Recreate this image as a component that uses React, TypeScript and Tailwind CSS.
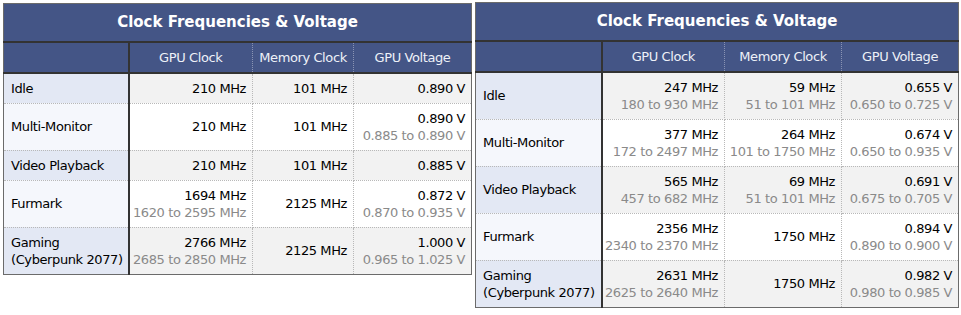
type Cell = { main: string; range?: string };
type Row = { label: string[]; gpu: Cell; mem: Cell; volt: Cell };

const left: Row[] = [
  { label: ["Idle"], gpu: { main: "210 MHz" }, mem: { main: "101 MHz" }, volt: { main: "0.890 V" } },
  {
    label: ["Multi-Monitor"],
    gpu: { main: "210 MHz" },
    mem: { main: "101 MHz" },
    volt: { main: "0.890 V", range: "0.885 to 0.890 V" },
  },
  { label: ["Video Playback"], gpu: { main: "210 MHz" }, mem: { main: "101 MHz" }, volt: { main: "0.885 V" } },
  {
    label: ["Furmark"],
    gpu: { main: "1694 MHz", range: "1620 to 2595 MHz" },
    mem: { main: "2125 MHz" },
    volt: { main: "0.872 V", range: "0.870 to 0.935 V" },
  },
  {
    label: ["Gaming", "(Cyberpunk 2077)"],
    gpu: { main: "2766 MHz", range: "2685 to 2850 MHz" },
    mem: { main: "2125 MHz" },
    volt: { main: "1.000 V", range: "0.965 to 1.025 V" },
  },
];

const right: Row[] = [
  {
    label: ["Idle"],
    gpu: { main: "247 MHz", range: "180 to 930 MHz" },
    mem: { main: "59 MHz", range: "51 to 101 MHz" },
    volt: { main: "0.655 V", range: "0.650 to 0.725 V" },
  },
  {
    label: ["Multi-Monitor"],
    gpu: { main: "377 MHz", range: "172 to 2497 MHz" },
    mem: { main: "264 MHz", range: "101 to 1750 MHz" },
    volt: { main: "0.674 V", range: "0.650 to 0.935 V" },
  },
  {
    label: ["Video Playback"],
    gpu: { main: "565 MHz", range: "457 to 682 MHz" },
    mem: { main: "69 MHz", range: "51 to 101 MHz" },
    volt: { main: "0.691 V", range: "0.675 to 0.705 V" },
  },
  {
    label: ["Furmark"],
    gpu: { main: "2356 MHz", range: "2340 to 2370 MHz" },
    mem: { main: "1750 MHz" },
    volt: { main: "0.894 V", range: "0.890 to 0.900 V" },
  },
  {
    label: ["Gaming", "(Cyberpunk 2077)"],
    gpu: { main: "2631 MHz", range: "2625 to 2640 MHz" },
    mem: { main: "1750 MHz" },
    volt: { main: "0.982 V", range: "0.980 to 0.985 V" },
  },
];

function Value({ cell }: { cell: Cell }) {
  return (
    <>
      <div className="text-black">{cell.main}</div>
      {cell.range && <div className="text-[#8a8a8a]">{cell.range}</div>}
    </>
  );
}

function ClockTable({ rows, widths }: { rows: Row[]; widths: number[] }) {
  const total = widths.reduce((a, b) => a + b, 0);
  return (
    <table
      className="table-fixed border-collapse border border-[#6b6b6b] font-['DejaVu_Sans',sans-serif] text-[13px] leading-[17px] tracking-[-0.4px]"
      style={{ width: total }}
    >
      <colgroup>
        {widths.map((w, i) => (
          <col key={i} style={{ width: w }} />
        ))}
      </colgroup>
      <thead>
        <tr className="bg-[#445586] border-b-2 border-[#333]">
          <th colSpan={4} className="h-[38px] text-center text-[15px] font-bold text-white tracking-normal">
            Clock Frequencies &amp; Voltage
          </th>
        </tr>
        <tr className="bg-[#445586] border-b-2 border-[#333]">
          <th className="h-[31px] border-r-2 border-[#333]" />
          <th className="text-center font-normal text-[#eef1f8] border-r border-dotted border-[#8a94b4]">GPU Clock</th>
          <th className="text-center font-normal text-[#eef1f8] border-r border-dotted border-[#8a94b4]">Memory Clock</th>
          <th className="text-center font-normal text-[#eef1f8]">GPU Voltage</th>
        </tr>
      </thead>
      <tbody>
        {rows.map((r, i) => {
          const odd = i % 2 === 0;
          return (
            <tr key={i} className={odd ? "bg-[#f2f2f2]" : "bg-white"}>
              <td
                className={`border-r-2 border-b border-r-[#333] border-b-[#b8b8b8] [border-style:none_solid_dotted_none] pl-[7px] py-[6px] text-black ${
                  odd ? "bg-[#e3e8f4]" : "bg-[#f5f7fc]"
                }`}
              >
                {r.label.map((l) => (
                  <div key={l}>{l}</div>
                ))}
              </td>
              <td className="border-r border-b border-dotted border-[#b8b8b8] pr-[6px] py-[6px] text-right">
                <Value cell={r.gpu} />
              </td>
              <td className="border-r border-b border-dotted border-[#b8b8b8] pr-[6px] py-[6px] text-right">
                <Value cell={r.mem} />
              </td>
              <td className="border-b border-dotted border-[#b8b8b8] pr-[6px] py-[6px] text-right">
                <Value cell={r.volt} />
              </td>
            </tr>
          );
        })}
      </tbody>
    </table>
  );
}

export default function App() {
  return (
    <div className="flex items-start gap-[3px] bg-white pl-[3px] pt-[2px] w-[961px] h-[315px] overflow-hidden">
      <div className="pt-[1px]">
        <ClockTable rows={left} widths={[125, 124, 101, 118]} />
      </div>
      <ClockTable rows={right} widths={[126, 123, 117, 117]} />
    </div>
  );
}
